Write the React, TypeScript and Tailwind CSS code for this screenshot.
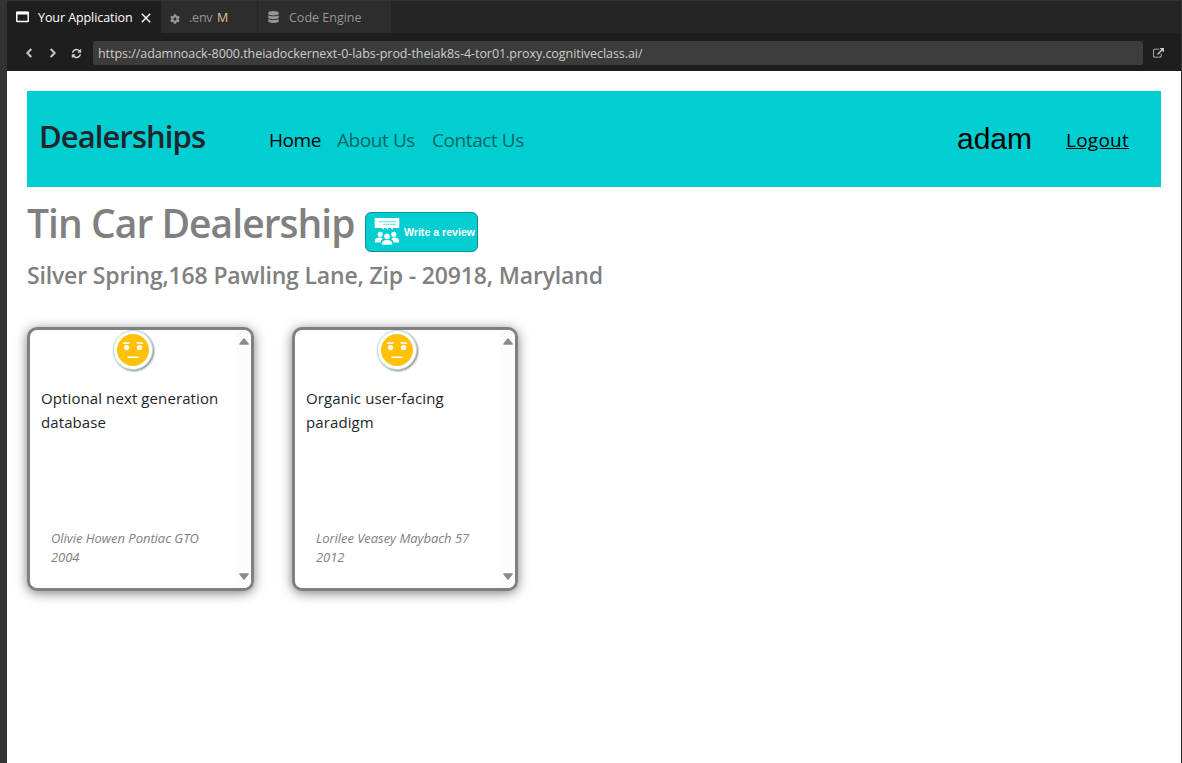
import type { ReactNode } from "react";
import { FaChevronLeft, FaChevronRight, FaCog, FaDatabase } from "react-icons/fa";

function RefreshIcon() {
  return (
    <svg viewBox="0 0 1792 1792" className="h-[11px] w-[11px] shrink-0" fill="currentColor">
      <path d="M1639 1056q0 5-1 7-64 268-268 434.500t-478 166.500q-146 0-282.500-55t-243.500-157l-129 129q-19 19-45 19t-45-19-19-45v-448q0-26 19-45t45-19h448q26 0 45 19t19 45-19 45l-137 137q71 66 161 102t187 36q134 0 250-65t186-179q11-17 53-117 8-23 30-23h192q13 0 22.500 9.500t9.500 22.500zm25-800v448q0 26-19 45t-45 19h-448q-26 0-45-19t-19-45 19-45l138-138q-148-137-349-137-134 0-250 65t-186 179q-11 17-53 117-8 23-30 23h-199q-13 0-22.500-9.500t-9.500-22.500v-7q65-268 270-434.500t480-166.500q146 0 284 55.500t245 156.500l130-129q19-19 45-19t45 19 19 45z" />
    </svg>
  );
}

function ExternalIcon() {
  return (
    <svg viewBox="0 0 1792 1792" className="h-[11px] w-[11px] shrink-0" fill="currentColor">
      <path d="M1408 928v320q0 119-84.500 203.500t-203.500 84.500h-832q-119 0-203.500-84.500t-84.500-203.500v-832q0-119 84.500-203.500t203.500-84.500h704q14 0 23 9t9 23v64q0 14-9 23t-23 9h-704q-66 0-113 47t-47 113v832q0 66 47 113t113 47h832q66 0 113-47t47-113v-320q0-14 9-23t23-9h64q14 0 23 9t9 23zm384-864v512q0 26-19 45t-45 19-45-19l-176-176-652 652q-10 10-23 10t-23-10l-114-114q-10-10-10-23t10-23l652-652-176-176q-19-19-19-45t19-45 45-19h512q26 0 45 19t19 45z" />
    </svg>
  );
}

function WindowIcon() {
  return (
    <svg viewBox="0 0 13 12" className="h-[12px] w-[13px] shrink-0" fill="none">
      <rect x="0.75" y="1.5" width="11.5" height="9" rx="0.8" stroke="white" strokeWidth="1.500" />
      <rect x="0" y="0.500" width="13" height="3" rx="0.8" fill="white" />
    </svg>
  );
}

function ReviewIcon() {
  return (
    <svg viewBox="0 0 26 28" className="h-[28px] w-[26px] shrink-0" fill="white">
      <path d="M1.500 0h23a.8.8 0 0 1 .8.8v8.400a.8.800 0 0 1-.8.800h-5.500l-.8 1.800-1.400-1.800h-2.300l-.9 1.800-1.300-1.800h-2.100l-.9 1.800-1.300-1.800h-6.500a.8.8 0 0 1-.8-.8v-8.400a.8.8 0 0 1 .8-.8z" />
      <path d="M5 3.700h17M9 6.300h13" stroke="#5edce0" strokeWidth="1.100" />
      <circle cx="6.200" cy="16.300" r="2.600" />
      <circle cx="19.800" cy="16.300" r="2.600" />
      <path d="M.9 24.500v-1.800c0-2 1.700-3.200 4.200-3.200 1.700 0 2.900.5 3.700 1.300-1.500.8-2.100 2-2.200 3.700zM25.100 24.500v-1.800c0-2-1.700-3.200-4.200-3.200-1.700 0-2.900.5-3.700 1.300 1.500.8 2.100 2 2.200 3.700z" />
      <circle cx="13" cy="18.400" r="2.800" />
      <path d="M7.800 26.800v-1.300c0-2.200 2-3.500 5.200-3.500s5.200 1.300 5.200 3.500v1.300z" />
    </svg>
  );
}

function NeutralFace() {
  return (
    <svg viewBox="0 0 44 44" className="h-[44px] w-[44px] shrink-0 overflow-visible">
      <circle
        cx="21"
        cy="20"
        r="19.500"
        fill="white"
        stroke="#b9e3da"
        strokeWidth="1"
        className="drop-shadow-[1px_1px_1px_rgba(0,0,0,0.5)]"
      />
      <circle cx="21" cy="20" r="16" fill="#ffc107" />
      <circle cx="14.500" cy="17.500" r="2.600" fill="white" />
      <circle cx="27.500" cy="17.500" r="2.600" fill="white" />
      <path d="M11 13.200l6.500-.5M24.500 12.700l6.500.5" stroke="white" strokeWidth="1.500" />
      <path d="M15.500 27.200h11" stroke="white" strokeWidth="1.600" />
    </svg>
  );
}

function ReviewCard({ review, author, className }: { review: ReactNode; author: ReactNode; className: string }) {
  return (
    <article
      className={`flex h-[264px] overflow-hidden rounded-[10px] border-[3px] border-[#808080] bg-white shadow-[0_2px_12px_rgba(0,0,0,0.5)] ${className}`}
    >
      <div className="flex min-w-0 flex-1 flex-col">
        <div className="flex h-[44px] justify-center pl-[1px]">
          <NeutralFace />
        </div>
        <p className="mt-[12px] h-[135px] pl-[11px] text-[15px] leading-[24px] tracking-[0.1px] whitespace-nowrap text-[#212529]">
          {review}
        </p>
        <p className="mt-[8px] pl-[21px] text-[13px] leading-[19px] tracking-[-0.04px] whitespace-nowrap text-[#808080] italic">
          {author}
        </p>
      </div>
      <div className="flex w-[15px] shrink-0 flex-col items-center justify-between bg-[#fcfcfc] pt-[8px] pb-[8px]">
        <svg viewBox="0 0 10 7" className="h-[7px] w-[10px]">
          <path d="M5 1L9 6H1z" fill="#8b8b8b" stroke="#8b8b8b" strokeWidth="1.500" strokeLinejoin="round" />
        </svg>
        <svg viewBox="0 0 10 7" className="h-[7px] w-[10px]">
          <path d="M5 6L9 1H1z" fill="#8b8b8b" stroke="#8b8b8b" strokeWidth="1.500" strokeLinejoin="round" />
        </svg>
      </div>
    </article>
  );
}

export default function App() {
  return (
    <div className="flex h-[763px] w-[1182px] overflow-hidden bg-[#333333] font-['Open_Sans','Noto_Sans',sans-serif]">
      <div className="w-[7px] shrink-0" />
      <div className="flex w-[1174px] flex-col">
        <div className="mt-px flex h-[32px] shrink-0 bg-[#252526] text-[12.500px] leading-[32px] whitespace-nowrap">
          <div className="flex w-[154px] items-center bg-[#1e1e1e] pl-[9px] text-white">
            <WindowIcon />
            <span className="ml-[9px] w-[95px] pt-[2px] tracking-[-0.08px]">Your Application</span>
            <svg viewBox="0 0 10 10" className="mt-[2px] ml-[8px] h-[10px] w-[10px]">
              <path d="M.8.800l8.400 8.400M9.200.8L.8 9.200" stroke="white" strokeWidth="1.400" />
            </svg>
          </div>
          <div className="flex w-[96px] items-center bg-[#2d2d2d] pl-[9px] text-[#969696]">
            <FaCog className="mt-[3px] h-[10px] w-[10px]" />
            <span className="ml-[9px] w-[27px] pt-[2px] tracking-[-0.2px]">.env</span>
            <span className="ml-[1px] pt-[2px] text-[#e2c08d]">M</span>
          </div>
          <div className="ml-px flex w-[133px] items-center bg-[#2d2d2d] pl-[10px] text-[#969696]">
            <FaDatabase className="h-[12px] w-[11px]" />
            <span className="ml-[10px] pt-[2px]">Code Engine</span>
          </div>
        </div>
        <div className="flex h-[38px] shrink-0 items-center bg-[#1e1e1e] text-[#cccccc]">
          <FaChevronLeft className="mt-[2px] ml-[17px] h-[10px] w-[10px]" stroke="currentColor" strokeWidth="30" />
          <FaChevronRight className="mt-[2px] ml-[14px] h-[10px] w-[10px]" stroke="currentColor" strokeWidth="30" />
          <span className="mt-[3px] ml-[13px] flex">
            <RefreshIcon />
          </span>
          <div className="mt-[2px] ml-[11px] h-[24px] w-[1050px] rounded-[2px] bg-[#3c3c3c] pl-[5px] text-[12.500px] leading-[25px] tracking-[-0.05px] whitespace-nowrap">
            https://adamnoack-8000.theiadockernext-0-labs-prod-theiak8s-4-tor01.proxy.cognitiveclass.ai/
          </div>
          <span className="mt-[3px] ml-[10px] flex">
            <ExternalIcon />
          </span>
        </div>
        <main className="flex flex-1 flex-col bg-white px-[20px] pt-[20px] whitespace-nowrap">
          <nav className="flex h-[96px] shrink-0 bg-[#00ced1]">
            <h2 className="ml-[12px] w-[230px] pt-[21px] text-[31px] leading-[48px] font-semibold tracking-[-0.92px] text-[#212529]">
              Dealerships
            </h2>
            <div className="flex pt-[33px] text-[19px] leading-[32px] tracking-[-0.42px]">
              <a className="w-[68px] text-black">Home</a>
              <a className="w-[95px] text-[#006768]">About Us</a>
              <a className="text-[#006768]">Contact Us</a>
            </div>
            <div className="mr-[32px] ml-auto flex text-black">
              <span className="w-[109px] pt-[28px] font-['Liberation_Sans',Arial,sans-serif] text-[30px] leading-[40px]">
                adam
              </span>
              <a className="w-[63px] pt-[33px] text-[19px] leading-[32px] tracking-[0.25px] underline">Logout</a>
            </div>
          </nav>
          <div className="flex h-[72px] shrink-0">
            <h1 className="w-[338px] pt-[12px] text-[39px] leading-[48px] font-semibold tracking-[-0.96px] text-[#808080]">
              Tin Car Dealership
            </h1>
            <a className="mt-[25px] flex h-[40px] w-[113px] items-center rounded-[6px] border border-[#1c8a96] bg-[#00ced1] pl-[8px]">
              <ReviewIcon />
              <span className="ml-[4px] pt-px font-['Liberation_Sans',Arial,sans-serif] text-[10.600px] font-bold text-white">
                Write a review
              </span>
            </a>
          </div>
          <h4 className="h-[68px] shrink-0 text-[23px] leading-[32px] font-semibold tracking-[-0.16px] text-[#808080]">
            Silver Spring,168 Pawling Lane, Zip - 20918, Maryland
          </h4>
          <div className="flex gap-[38px]">
            <ReviewCard
              className="w-[227px]"
              review={<>Optional next generation<br />database</>}
              author={<>Olivie Howen Pontiac GTO<br />2004</>}
            />
            <ReviewCard
              className="w-[226px]"
              review={<>Organic user-facing<br />paradigm</>}
              author={<>Lorilee Veasey Maybach 57<br />2012</>}
            />
          </div>
        </main>
      </div>
    </div>
  );
}
